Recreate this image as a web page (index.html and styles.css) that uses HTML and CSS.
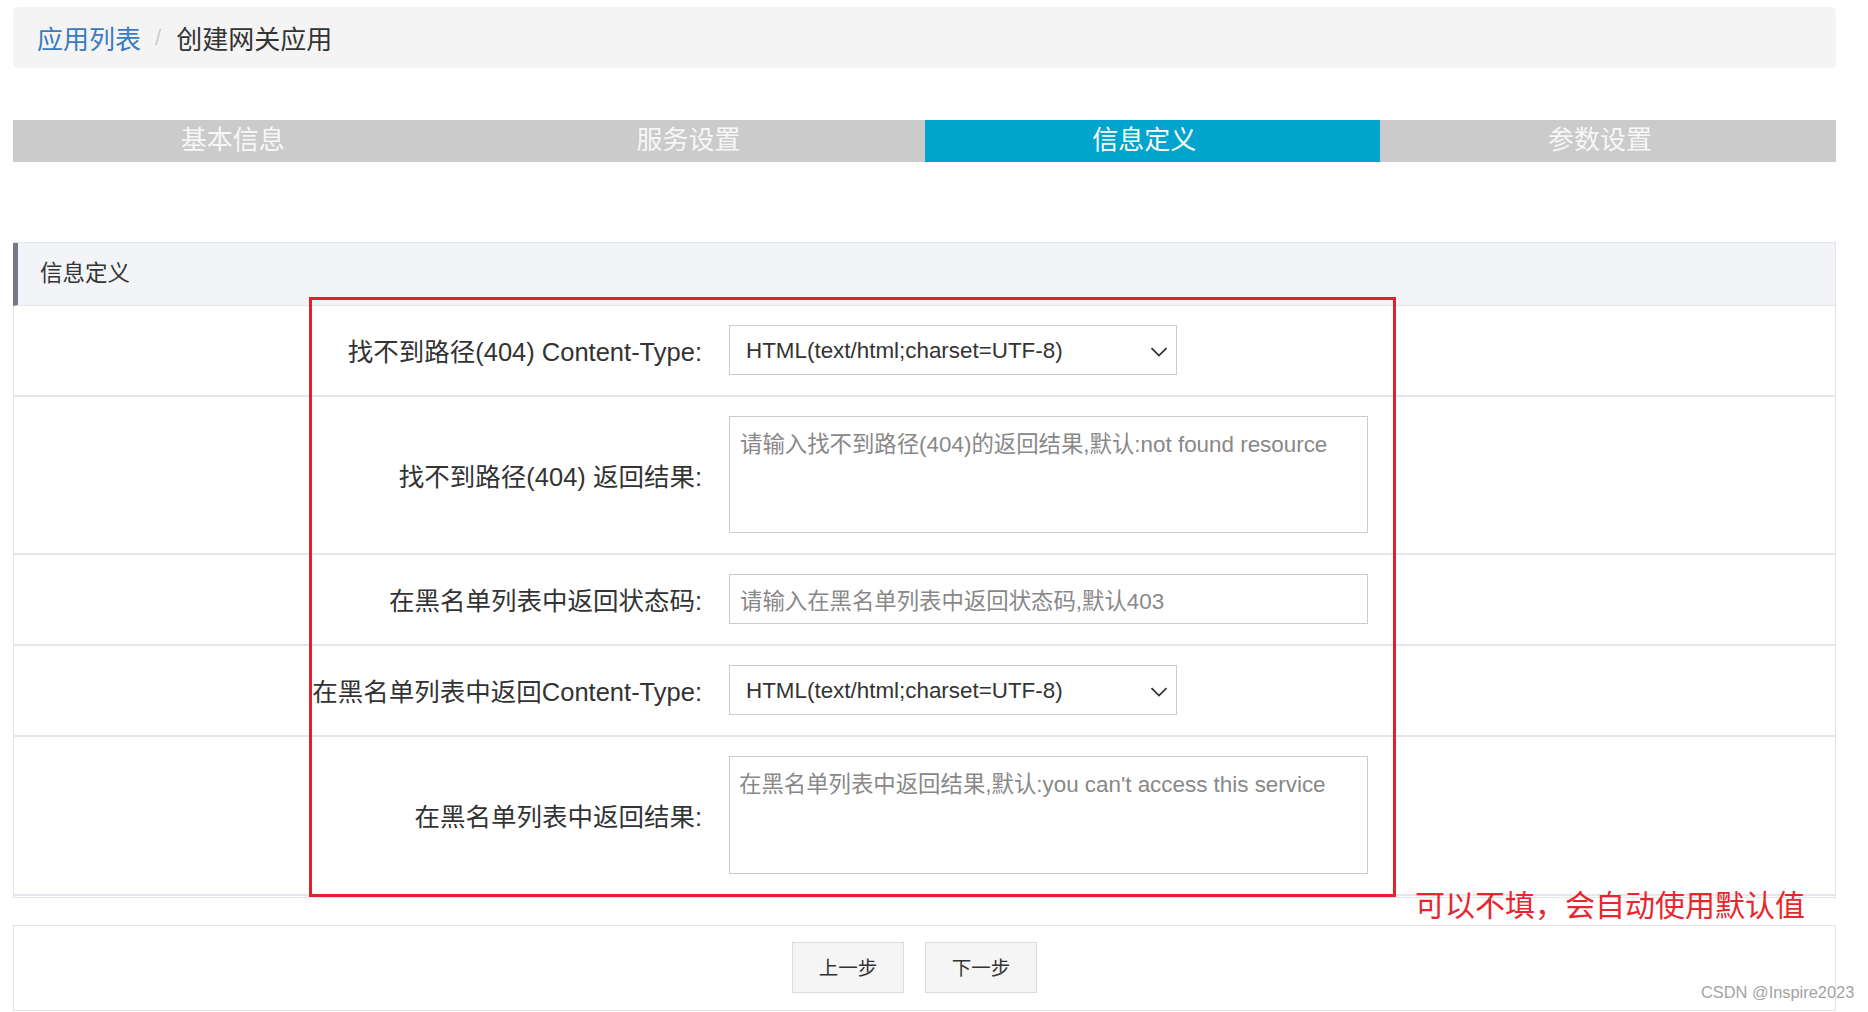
FILE: index.html
```html
<!DOCTYPE html>
<html lang="zh-CN">
<head>
<meta charset="utf-8">
<title>创建网关应用</title>
<link rel="stylesheet" href="styles.css">
</head>
<body>
<div class="page">
  <div class="breadcrumb">
    <a class="crumb-link">应用列表</a>
    <span class="crumb-sep">/</span>
    <span class="crumb-current">创建网关应用</span>
  </div>

  <div class="steps">
    <div class="step">基本信息</div>
    <div class="step">服务设置</div>
    <div class="step step-active">信息定义</div>
    <div class="step">参数设置</div>
  </div>

  <div class="panel">
    <div class="panel-heading">信息定义</div>
    <div class="panel-body">
      <div class="form-row">
        <div class="form-label">找不到路径(404) Content-Type:</div>
        <div class="select">
          <span>HTML(text/html;charset=UTF-8)</span>
          <svg class="chevron" width="18" height="10" viewBox="0 0 18 10"><polyline points="1.5,1.2 9,8.6 16.5,1.2" fill="none" stroke="#333" stroke-width="1.8"/></svg>
        </div>
      </div>
      <div class="form-row">
        <div class="form-label">找不到路径(404) 返回结果:</div>
        <div class="textarea"><span class="placeholder">请输入找不到路径(404)的返回结果,默认:not found resource</span></div>
      </div>
      <div class="form-row">
        <div class="form-label">在黑名单列表中返回状态码:</div>
        <div class="input"><span class="placeholder">请输入在黑名单列表中返回状态码,默认403</span></div>
      </div>
      <div class="form-row">
        <div class="form-label">在黑名单列表中返回Content-Type:</div>
        <div class="select">
          <span>HTML(text/html;charset=UTF-8)</span>
          <svg class="chevron" width="18" height="10" viewBox="0 0 18 10"><polyline points="1.5,1.2 9,8.6 16.5,1.2" fill="none" stroke="#333" stroke-width="1.8"/></svg>
        </div>
      </div>
      <div class="form-row form-row-tall">
        <div class="form-label">在黑名单列表中返回结果:</div>
        <div class="textarea textarea-b"><span class="placeholder">在黑名单列表中返回结果,默认:you can't access this service</span></div>
      </div>
    </div>
  </div>

  <div class="footer">
    <button class="btn">上一步</button>
    <button class="btn">下一步</button>
  </div>

  <div class="annot-box"></div>
  <div class="annot-text">可以不填，会自动使用默认值</div>
  <div class="watermark">CSDN @Inspire2023</div>
</div>
</body>
</html>
```

FILE: styles.css
```css
html, body {
  margin: 0;
  padding: 0;
  height: 100%;
  overflow: hidden;
  background: #ffffff;
}

body {
  font-family: "Liberation Sans", "Noto Sans CJK SC", sans-serif;
  color: #333333;
}

.page {
  position: relative;
  width: 1823px;
  padding: 7px 0 0 13px;
}

/* breadcrumb */
.breadcrumb {
  height: 61px;
  background: #f4f4f4;
  border-radius: 5px;
  display: flex;
  align-items: center;
  padding-left: 24px;
  font-size: 26px;
}

.crumb-link {
  color: #3a7bbf;
}

.crumb-sep {
  color: #cccccc;
  margin: 0 15px 0 14px;
  font-size: 22px;
}

.crumb-current {
  color: #333333;
}

/* steps */
.steps {
  margin-top: 52px;
  display: grid;
  grid-template-columns: repeat(4, 1fr);
  height: 42px;
  background: #cbcbcb;
}

.step {
  text-align: center;
  line-height: 40px;
  font-size: 26px;
  color: #f7f7f7;
  padding-right: 16px;
}

.step-active {
  background: #00a4cc;
  color: #ffffff;
}

/* panel */
.panel {
  margin-top: 80px;
  border: 1px solid #e2e6ea;
}

.panel-heading {
  height: 62px;
  margin-left: -1px;
  border-left: 5px solid #79788a;
  border-bottom: 1px solid #e2e6ea;
  background: #f3f4f8;
  display: flex;
  align-items: center;
  padding-left: 22px;
  padding-bottom: 6px;
  box-sizing: border-box;
  height: 63px;
  font-size: 22.5px;
  color: #333333;
}

.panel-body {
  padding-bottom: 1px;
}

.form-row {
  display: grid;
  grid-template-columns: 688px auto;
  column-gap: 27px;
  align-items: center;
  padding: 19px 0 20px;
  border-bottom: 2px solid #e4e7eb;
}

.form-label {
  text-align: right;
  font-size: 25.5px;
  color: #333333;
  white-space: nowrap;
  padding-bottom: 1px;
}

.select {
  position: relative;
  box-sizing: border-box;
  width: 448px;
  height: 50px;
  border: 1px solid #cccccc;
  display: flex;
  align-items: center;
  padding-left: 16px;
  padding-top: 2px;
  font-size: 22.4px;
  color: #333333;
  background: #ffffff;
}

.chevron {
  position: absolute;
  right: 8px;
  top: 21px;
}

.textarea {
  box-sizing: border-box;
  width: 639px;
  height: 117px;
  border: 1px solid #cccccc;
  padding: 9px 10px;
  background: #ffffff;
}

.textarea-b {
  height: 118px;
  padding-left: 9px;
}

.input {
  box-sizing: border-box;
  width: 639px;
  height: 50px;
  border: 1px solid #cccccc;
  display: flex;
  align-items: center;
  padding-left: 10px;
  background: #ffffff;
}

.placeholder {
  font-size: 22.4px;
  color: #888888;
  white-space: nowrap;
}

/* footer */
.footer {
  margin-top: 27px;
  height: 86px;
  box-sizing: border-box;
  border: 1px solid #e2e6ea;
  display: flex;
  justify-content: center;
  align-items: flex-start;
  gap: 21px;
  padding-top: 16px;
  padding-right: 20px;
}

.btn {
  width: 112px;
  height: 51px;
  background: #f5f5f5;
  border: 1px solid #dadada;
  font-family: "Liberation Sans", "Noto Sans CJK SC", sans-serif;
  font-size: 19.5px;
  color: #333333;
  padding: 0 0 3px;
}

/* annotations (overlays) */
.annot-box {
  position: absolute;
  left: 309px;
  top: 297px;
  width: 1081px;
  height: 594px;
  border: 3px solid #e5202e;
}

.annot-text {
  position: absolute;
  left: 1415px;
  top: 881px;
  font-size: 30px;
  color: #e8262d;
  white-space: nowrap;
}

.watermark {
  position: absolute;
  left: 1701px;
  top: 983px;
  font-size: 16.4px;
  color: #a3a3a3;
  white-space: nowrap;
}
```
